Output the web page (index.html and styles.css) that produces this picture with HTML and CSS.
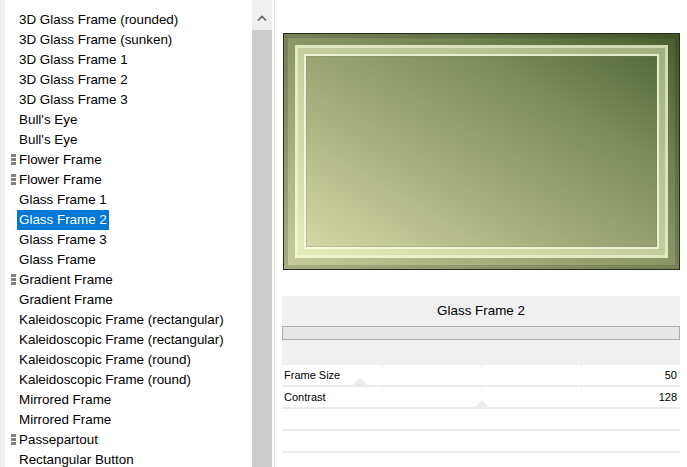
FILE: index.html
```html
<!DOCTYPE html>
<html>
<head>
<meta charset="utf-8">
<link rel="stylesheet" href="styles.css">
</head>
<body>
<div class="app">
  <div class="edge"></div>
  <ul class="list">
    <li class="item"><span class="label">3D Glass Frame (rounded)</span></li>
    <li class="item"><span class="label">3D Glass Frame (sunken)</span></li>
    <li class="item"><span class="label">3D Glass Frame 1</span></li>
    <li class="item"><span class="label">3D Glass Frame 2</span></li>
    <li class="item"><span class="label">3D Glass Frame 3</span></li>
    <li class="item"><span class="label">Bull's Eye</span></li>
    <li class="item"><span class="label">Bull's Eye</span></li>
    <li class="item grip"><span class="label">Flower Frame</span></li>
    <li class="item grip"><span class="label">Flower Frame</span></li>
    <li class="item"><span class="label">Glass Frame 1</span></li>
    <li class="item selected"><span class="label">Glass Frame 2</span></li>
    <li class="item"><span class="label">Glass Frame 3</span></li>
    <li class="item"><span class="label">Glass Frame</span></li>
    <li class="item grip"><span class="label">Gradient Frame</span></li>
    <li class="item"><span class="label">Gradient Frame</span></li>
    <li class="item"><span class="label">Kaleidoscopic Frame (rectangular)</span></li>
    <li class="item"><span class="label">Kaleidoscopic Frame (rectangular)</span></li>
    <li class="item"><span class="label">Kaleidoscopic Frame (round)</span></li>
    <li class="item"><span class="label">Kaleidoscopic Frame (round)</span></li>
    <li class="item"><span class="label">Mirrored Frame</span></li>
    <li class="item"><span class="label">Mirrored Frame</span></li>
    <li class="item grip"><span class="label">Passepartout</span></li>
    <li class="item"><span class="label">Rectangular Button</span></li>
  </ul>
  <div class="scrollbar">
    <div class="sb-btn">
      <svg width="10" height="6" viewBox="0 0 10 6"><path d="M1 5.5 L5 1.5 L9 5.5" fill="none" stroke="#606060" stroke-width="1.6"/></svg>
    </div>
    <div class="sb-thumb"></div>
  </div>
  <div class="divider"></div>
  <div class="right">
    <div class="preview">
      <div class="b0"><div class="b1"><div class="b2"><div class="b3"><div class="b4"><div class="pic"></div></div></div></div></div></div>
    </div>
    <div class="props">
      <div class="title">Glass Frame 2</div>
      <div class="bar"></div>
      <div class="spacer"></div>
      <div class="row">
        <span class="tick t1"></span><span class="tick t2"></span><span class="tick t3"></span>
        <span class="thumb" style="left: 19.6%"></span>
        <span class="name">Frame Size</span><span class="val">50</span>
      </div>
      <div class="row">
        <span class="tick t1"></span><span class="tick t2"></span><span class="tick t3"></span>
        <span class="thumb" style="left: 50.2%"></span>
        <span class="name">Contrast</span><span class="val">128</span>
      </div>
      <div class="row"></div>
      <div class="row"></div>
      <div class="row last"></div>
    </div>
  </div>
</div>
</body>
</html>
```
FILE: styles.css
```css
* { box-sizing: border-box; }
html, body { margin: 0; padding: 0; }
body {
  width: 687px;
  height: 467px;
  overflow: hidden;
  background: #fff;
  font-family: "Liberation Sans", Arial, sans-serif;
  color: #000;
}
.app {
  display: flex;
  height: 467px;
}
.edge {
  width: 5px;
  background: #f0f0f0;
  flex: none;
}
.list {
  list-style: none;
  margin: 0;
  padding: 10px 0 0 0;
  width: 247px;
  flex: none;
  background: #fff;
  overflow: hidden;
}
.item {
  height: 20px;
  line-height: 20px;
  font-size: 13.4px;
  padding-left: 12px;
  position: relative;
  white-space: nowrap;
}
.label {
  display: inline-block;
  padding: 0 2px;
  height: 20px;
}
.selected .label {
  background: #0078d7;
  color: #fff;
}
.grip::before {
  content: "";
  position: absolute;
  left: 6px;
  top: 4px;
  width: 5px;
  height: 11px;
  background: repeating-linear-gradient(to bottom, #808080 0 3px, transparent 3px 4px);
}
.scrollbar {
  width: 20px;
  flex: none;
  display: flex;
  flex-direction: column;
  background: #f0f0f0;
}
.sb-btn {
  height: 30px;
  display: flex;
  align-items: center;
  justify-content: center;
  padding-top: 6px;
}
.sb-thumb {
  flex: 1;
  background: #cdcdcd;
}
.divider {
  width: 3px;
  flex: none;
  border-right: 1px solid #e6e6e6;
}
.right {
  flex: 1;
  padding: 33px 7px 0 7px;
  display: flex;
  flex-direction: column;
}
.preview {
  flex: none;
  margin-left: 1px;
  width: 397px;
  height: 237px;
  background: linear-gradient(to top right, #dfe2b2 0%, #a6ad7e 40%, #7d8c5c 70%, #4b5f31 100%);
  border: 1px solid #252e16;
}
.b0 {
  height: 100%;
  border: 4px solid rgba(40, 52, 18, 0.3);
}
.b1 {
  height: 100%;
  border: 7px solid rgba(60, 75, 30, 0.14);
}
.b2 {
  height: 100%;
  border: 3px solid rgba(250, 255, 220, 0.75);
}
.b3 {
  height: 100%;
  border: 6px solid rgba(240, 250, 200, 0.5);
}
.b4 {
  height: 100%;
  border: 2px solid rgba(252, 255, 230, 0.85);
}
.pic {
  height: 100%;
  border: 1px solid rgba(120, 130, 80, 0.25);
}
.props {
  flex: none;
  margin-top: 26px;
  width: 398px;
  display: flex;
  flex-direction: column;
}
.title {
  height: 30px;
  line-height: 30px;
  text-align: center;
  font-size: 13.4px;
  background: #f0f0f0;
}
.bar {
  height: 14px;
  background: #e6e6e6;
  border: 1px solid #adadad;
}
.spacer {
  height: 25px;
  background: #f0f0f0;
}
.row {
  position: relative;
  height: 22px;
  border-bottom: 2px solid #ebebeb;
  display: flex;
  justify-content: space-between;
  align-items: center;
  padding: 0 3px 0 2px;
  font-size: 11px;
}
.row.last { border-bottom: none; }
.name, .val { position: relative; }
.tick {
  position: absolute;
  top: 0;
  width: 1px;
  height: 4px;
  background: #f0f0f0;
}
.t1 { left: 25%; }
.t2 { left: 50%; }
.t3 { left: 75%; }
.thumb {
  position: absolute;
  bottom: 0;
  width: 14px;
  height: 7px;
  margin-left: -7px;
  background: #ebebeb;
  clip-path: polygon(50% 0, 100% 100%, 0 100%);
}
```
